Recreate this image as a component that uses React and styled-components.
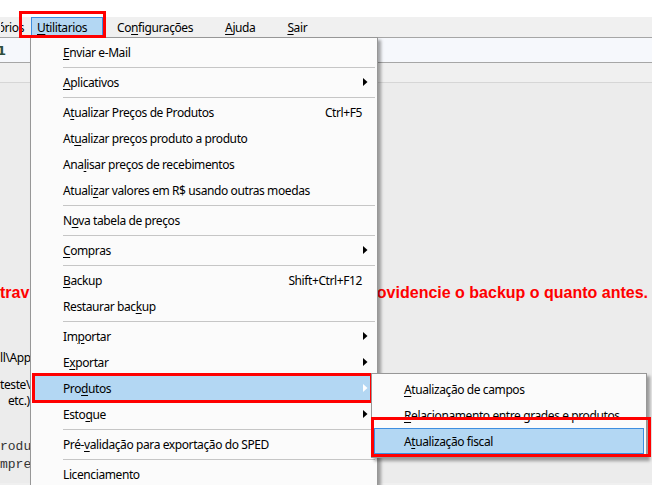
import styled, { createGlobalStyle } from "styled-components";

const GlobalStyle = createGlobalStyle`
  html, body {
    margin: 0;
    padding: 0;
    background: #f0f0f0;
  }
  * { box-sizing: border-box; }
`;

const ui = `"Noto Sans", "Open Sans", sans-serif`;

const menuItems = [
  { label: "Enviar e-Mail", key: 0 },
  { sep: true },
  { label: "Aplicativos", key: 0, sub: true },
  { sep: true },
  { label: "Atualizar Preços de Produtos", key: 1, shortcut: "Ctrl+F5" },
  { label: "Atualizar preços produto a produto", key: 2 },
  { label: "Analisar preços de recebimentos", key: 3 },
  { label: "Atualizar valores em R$ usando outras moedas", key: 6 },
  { sep: true },
  { label: "Nova tabela de preços", key: 1 },
  { sep: true },
  { label: "Compras", key: 0, sub: true },
  { sep: true },
  { label: "Backup", key: 0, shortcut: "Shift+Ctrl+F12" },
  { label: "Restaurar backup", key: 13 },
  { sep: true },
  { label: "Importar", key: 2, sub: true },
  { label: "Exportar", key: 1, sub: true },
  { label: "Produtos", key: 3, sub: true, active: true },
  { label: "Estoque", key: 4, sub: true },
  { sep: true },
  { label: "Pré-validação para exportação do SPED", key: 4 },
  { sep: true },
  { label: "Licenciamento" },
];

const subItems = [
  { label: "Atualização de campos", key: 0 },
  { label: "Relacionamento entre grades e produtos", key: 0 },
  { label: "Atualização fiscal", key: 1, focused: true },
];

function Label({ text, k }) {
  if (k === undefined) return <span>{text}</span>;
  return (
    <span>
      {text.slice(0, k)}
      <u>{text[k]}</u>
      {text.slice(k + 1)}
    </span>
  );
}

function Arrow({ light }) {
  return (
    <svg width="5" height="8" viewBox="0 0 5 8">
      <path d="M0 0 L4.5 4 L0 8 Z" fill={light ? "#ffffff" : "#000000"} />
    </svg>
  );
}

export default function App() {
  return (
    <Screen>
      <GlobalStyle />
      <TopStrip />
      <MenuBar>
        <BarItem $cut>órios</BarItem>
        <BarItem $open>
          <Label text="Utilitarios" k={0} />
          <Callout $t={-7} $l={-13} $r={-4} $b={-1} />
        </BarItem>
        <BarItem>
          <Label text="Configurações" k={2} />
        </BarItem>
        <BarItem>
          <Label text="Ajuda" k={0} />
        </BarItem>
        <BarItem>
          <Label text="Sair" k={0} />
        </BarItem>
      </MenuBar>
      <Toolbar>
        <ToolGlyph>1</ToolGlyph>
      </Toolbar>
      <SubBar />
      <Content>
        <Warning>
          <span>trav</span>
          <span>ovidencie o backup o quanto antes.</span>
        </Warning>
        <Line $top={47}>ll\AppData\Local</Line>
        <Line $top={11}>teste\dados</Line>
        <Line $top={0} $indent={8}>etc.)</Line>
        <Code $top={30}>roduto</Code>
        <Code $top={2}>mpresa</Code>
      </Content>

      <Dropdown>
        {menuItems.map((it, i) =>
          it.sep ? (
            <Separator key={i} />
          ) : (
            <Item key={i} $active={it.active}>
              <Label text={it.label} k={it.key} />
              <Shortcut>{it.shortcut}</Shortcut>
              <ArrowCell>{it.sub && <Arrow light={it.active} />}</ArrowCell>
              {it.active && <Callout $t={-2} $l={-1} $r={-2} $b={-2} />}
            </Item>
          )
        )}
      </Dropdown>

      <SubMenu>
        {subItems.map((it, i) => (
          <SubItem key={i} $focused={it.focused}>
            <Label text={it.label} k={it.key} />
            {it.focused && <Callout $t={-12} $l={-4} $r={-8} $b={-4} />}
          </SubItem>
        ))}
      </SubMenu>
    </Screen>
  );
}

const Screen = styled.div`
  position: relative;
  width: 652px;
  height: 485px;
  overflow: hidden;
  background: #f0f0f0;
  font-family: ${ui};
  font-size: 12px;
  letter-spacing: -0.4px;
  color: #000;
`;

const TopStrip = styled.div`
  height: 17px;
  background: #ffffff;
`;

const MenuBar = styled.div`
  height: 20px;
  display: flex;
  align-items: stretch;
  background: #f0f0f0;
`;

const BarItem = styled.div`
  position: relative;
  display: flex;
  align-items: center;
  justify-content: ${(p) => (p.$cut ? "flex-end" : "flex-start")};
  width: ${(p) => (p.$cut ? "31px" : p.$open ? "72px" : "auto")};
  overflow: ${(p) => (p.$cut ? "hidden" : "visible")};
  padding: ${(p) => (p.$cut ? "0 6px 0 0" : p.$open ? "0 0 0 5px" : "0")};
  margin-right: ${(p) => (p.$cut ? "0" : p.$open ? "13px" : "30px")};
  white-space: nowrap;
  background: ${(p) => (p.$open ? "#b3d7f3" : "transparent")};
  border: 1px solid ${(p) => (p.$open ? "#3d8ee0" : "transparent")};
  border-bottom: none;
  u { text-decoration-thickness: 1px; text-underline-offset: 2px; }
`;

const Toolbar = styled.div`
  height: 26px;
  display: flex;
  align-items: center;
  background: #f6f8fc;
  border-top: 1px solid #a6a6a6;
  border-bottom: 1px solid #a6a6a6;
`;

const ToolGlyph = styled.span`
  margin-left: -3px;
  font-family: "DejaVu Sans", sans-serif;
  font-size: 13px;
  font-weight: bold;
  color: #2f4f3f;
`;

const SubBar = styled.div`
  height: 20px;
  background: #f0f0f0;
  border-bottom: 1px solid #d6d6d6;
`;

const Content = styled.div`
  display: flex;
  flex-direction: column;
  background: #ececec;
  height: 400px;
`;

const Warning = styled.div`
  margin-top: 200px;
  height: 20px;
  display: flex;
  justify-content: space-between;
  align-items: center;
  padding-right: 4px;
  font-family: "Liberation Sans", Arial, sans-serif;
  font-weight: bold;
  font-size: 16px;
  letter-spacing: 0;
  color: #ff0000;
`;

const Line = styled.div`
  margin-top: ${(p) => p.$top}px;
  padding-left: ${(p) => p.$indent || 0}px;
  height: 16px;
  line-height: 16px;
  white-space: nowrap;
  font-family: ${ui};
  font-size: 12px;
`;

const Code = styled(Line)`
  font-family: "Liberation Mono", "Courier New", monospace;
  font-size: 13px;
  letter-spacing: 0;
  color: #333;
`;

const Dropdown = styled.div`
  position: absolute;
  left: 30px;
  top: 37px;
  width: 348px;
  height: 470px;
  padding-top: 1px;
  background: #fbfbfb;
  border: 1px solid #979797;
  box-shadow: 3px 3px 3px rgba(0, 0, 0, 0.35);
  z-index: 2;
`;

const Item = styled.div`
  position: relative;
  height: 26px;
  margin: 0 6px 0 2px;
  padding: 0 1px 0 30px;
  display: grid;
  grid-template-columns: 1fr auto 8px;
  align-items: center;
  white-space: nowrap;
  background: ${(p) => (p.$active ? "#b3d7f3" : "transparent")};
  u { text-decoration-thickness: 1px; text-underline-offset: 2px; }
`;

const Shortcut = styled.span`
  text-align: right;
`;

const ArrowCell = styled.span`
  display: flex;
  align-items: center;
  justify-content: flex-end;
  padding-right: 2px;
`;

const Separator = styled.div`
  height: 4px;
  margin: 0 2px 0 32px;
  display: flex;
  align-items: center;
  &::after {
    content: "";
    flex: 1;
    height: 1px;
    background: #c6c6c6;
  }
`;

const SubMenu = styled.div`
  position: absolute;
  left: 371px;
  top: 373px;
  width: 276px;
  padding: 2px 0 3px;
  background: #fbfbfb;
  border: 1px solid #979797;
  box-shadow: 3px 3px 3px rgba(0, 0, 0, 0.35);
  z-index: 3;
`;

const SubItem = styled.div`
  position: relative;
  height: 26px;
  margin: 0 2px;
  padding-left: 29px;
  display: flex;
  align-items: center;
  white-space: nowrap;
  background: ${(p) => (p.$focused ? "#b3d7f3" : "transparent")};
  border: 1px solid ${(p) => (p.$focused ? "#3d8ee0" : "transparent")};
  u { text-decoration-thickness: 1px; text-underline-offset: 2px; }
`;

const Callout = styled.div`
  position: absolute;
  top: ${(p) => p.$t}px;
  left: ${(p) => p.$l}px;
  right: ${(p) => p.$r}px;
  bottom: ${(p) => p.$b}px;
  border: 3px solid #ff0000;
  pointer-events: none;
  z-index: 5;
`;
